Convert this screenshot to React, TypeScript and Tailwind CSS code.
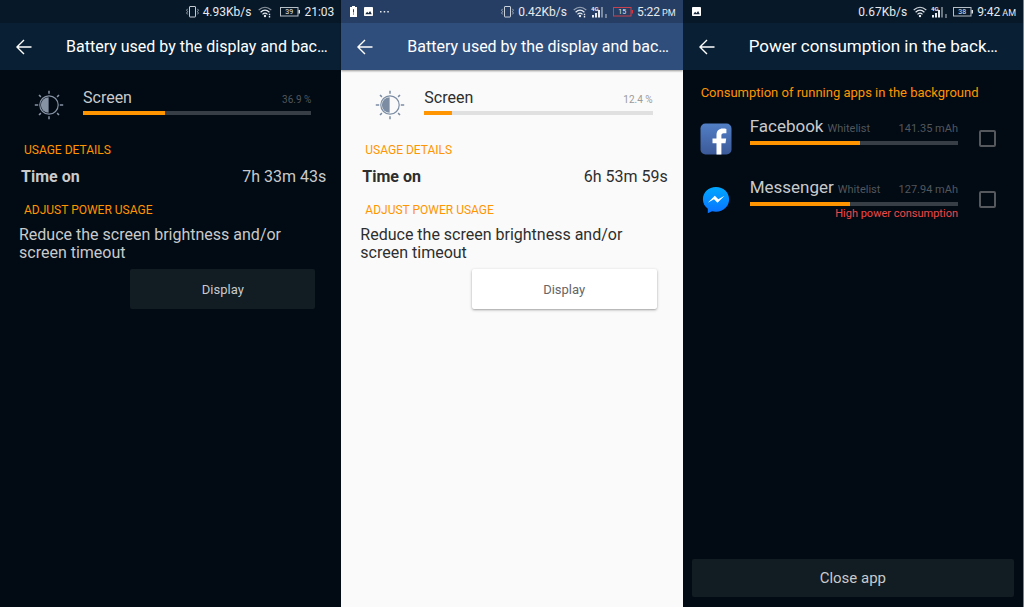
import type { ReactNode } from "react";
import clsx from "clsx";

interface UsagePanelProps {
  dark: boolean;
  percent: string;
  progress: number;
  timeOn: string;
  status: ReactNode;
}

interface AppUsage {
  name: string;
  icon: ReactNode;
  usage: string;
  progress: number;
  warning?: string;
}

function VibrateIcon() {
  return (
    <svg width="13" height="12" viewBox="0 0 13 12" fill="none" stroke="currentColor">
      <rect x="3.5" y="0.5" width="6" height="10.5" rx="0.5" opacity="0.85" />
      <path
        d="M1.6 2.8 .6 4.2l1 1.4-1 1.4 1 1.4M11.4 2.8l1 1.4-1 1.4 1 1.4-1 1.4"
        strokeWidth="0.8"
        opacity="0.8"
      />
    </svg>
  );
}

function WifiIcon({ arrows = true }: { arrows?: boolean }) {
  return (
    <svg width="14" height="12" viewBox="0 0 14 12" fill="none" stroke="currentColor">
      <path d="M.7 4Q7-1.6 13.3 4" strokeWidth="1.1" opacity={arrows ? 0.6 : 0.9} />
      <path d="M2.6 6.2Q7 2 11.4 6.2M4.5 8.4Q7 6 9.5 8.4" strokeWidth="1.2" />
      <circle cx="7" cy="10" r="1.2" fill="currentColor" stroke="none" />
      {arrows && <path d="M11.5 7.8v1.4M11.5 10v1.4" strokeWidth="1.4" />}
    </svg>
  );
}

function SignalIcon() {
  return (
    <svg width="16" height="12" viewBox="0 0 16 12" fill="currentColor">
      <text x="0" y="5" fontSize="6" fontWeight="700" fontFamily="Roboto, sans-serif">
        4G
      </text>
      <path d="M1 9h2v2.5H1zM4 7h2v4.500H4zM7 4h2v7.500H7z" />
      <path d="M10 1h2v10.500h-2z" opacity="0.45" />
      <path d="M14.500 8h1v4h-1z" opacity="0.8" />
    </svg>
  );
}

function BatteryIcon({ level, low }: { level: number; low?: boolean }) {
  return (
    <svg width="20" height="10" viewBox="0 0 20 10">
      <rect x="0.5" y="0.5" width="17.5" height="8.5" fill="none" stroke={low ? "#c8414f" : "#b6bec6"} />
      <path d="M18.5 3H20v3.5h-1.5z" fill={low ? "#d8343f" : "#dfe3e6"} />
      <text x="9.3" y="7.4" fontSize="7" textAnchor="middle" fill="#e3e7ea" fontFamily="Roboto, sans-serif">
        {level}
      </text>
    </svg>
  );
}

function BatteryAlertIcon() {
  return (
    <svg width="7" height="11" viewBox="0 0 7 11">
      <path d="M2 0h3v1h2v10H0V1h2z" fill="#fff" />
      <path d="M3 3.2h1v3.4H3zM3 7.5h1v1.1H3z" fill="#2b4368" />
    </svg>
  );
}

function ImageIcon() {
  return (
    <svg width="9" height="9" viewBox="0 0 9 9">
      <rect width="9" height="9" rx="0.8" fill="#fff" />
      <path d="m1.3 7.2 1.8-2.4 1.3 1.4 1.7-2.2 1.7 3.2z" fill="#16273c" />
    </svg>
  );
}

function MoreIcon() {
  return (
    <svg width="9" height="3" viewBox="0 0 9 3" fill="currentColor">
      <path d="M0 1h1.500v1.500H0zM3.700 1h1.500v1.500H3.700zM7.300 1h1.500v1.500H7.300z" />
    </svg>
  );
}

function BrightnessIcon() {
  return (
    <svg width="30" height="30" viewBox="0 0 30 30" fill="none" stroke="currentColor">
      <circle cx="15" cy="15" r="9.2" strokeWidth="1.2" />
      <path d="M14.6 7.3a7.7 7.7 0 0 0 0 15.400z" fill="currentColor" stroke="none" />
      <path
        d="M15 .8v3M15 26.2v3M.8 15h3.400M25.8 15h3.400M5 5l1.900 1.900M23.1 23.1 25 25M25 5l-1.900 1.900M6.900 23.1 5 25"
        strokeWidth="1.5"
      />
    </svg>
  );
}

function FacebookIcon() {
  return (
    <svg width="32" height="32" viewBox="0 0 32 32">
      <defs>
        <linearGradient id="fb" x1="0" y1="0" x2="0" y2="1">
          <stop offset="0" stopColor="#527fc6" />
          <stop offset="1" stopColor="#3b5998" />
        </linearGradient>
      </defs>
      <rect x="0.5" y="0.5" width="31" height="31" rx="5" fill="url(#fb)" />
      <path
        d="M16.500 31.500V20.300h-4v-4.800h4v-3.300c0-4.300 2.400-6.600 6.300-6.600 1.400 0 2.700.1 3.600.3v4.300h-2.600c-1.900 0-2.400.9-2.400 2.400v2.900h4.800l-.7 4.800h-4.100v11.200z"
        fill="#fff"
      />
    </svg>
  );
}

function MessengerIcon() {
  return (
    <svg width="32" height="32" viewBox="0 0 32 32">
      <defs>
        <linearGradient id="msg" x1="0" y1="0" x2="0" y2="1">
          <stop offset="0" stopColor="#00a8ff" />
          <stop offset="1" stopColor="#0a72ff" />
        </linearGradient>
      </defs>
      <path
        d="M16 3C8.600 3 2.900 8.300 2.900 15.300c0 4 1.800 7.200 4.900 9.400v4.500l4.200-2c1.300.3 2.600.5 4 .5 7.400 0 13.100-5.400 13.100-12.400S23.400 3 16 3z"
        fill="url(#msg)"
      />
      <path d="m7.800 18.700 7-7 3.500 3.500 6.200-3.500-7 7.100-3.500-3.500z" fill="#fff" />
    </svg>
  );
}

function StatusBar({ left, children }: { left?: ReactNode; children: ReactNode }) {
  return (
    <div className="flex h-[23px] items-center justify-between bg-black/20 pr-[7px] pl-[9px] text-xs text-[#e6eaee]">
      <div className="flex items-center gap-[7px]">{left}</div>
      <div className="flex items-center">{children}</div>
    </div>
  );
}

function Header({ title, dark, large, status }: { title: string; dark: boolean; large?: boolean; status: ReactNode }) {
  return (
    <header className={clsx("text-white", dark ? "bg-[#091f34]" : "bg-[#304e7c] shadow-xs shadow-black/40")}>
      {status}
      <div className="flex h-[47px] items-center pt-px pl-4">
        <button type="button" aria-label="Back" className="mr-[34px]">
          <svg width="16" height="16" viewBox="0 0 16 16" fill="none" stroke="currentColor" strokeWidth="1.4">
            <path d="M15.500 8H.8M8 1 .9 8l7.100 7" />
          </svg>
        </button>
        <h1 className={clsx("whitespace-nowrap", large ? "text-[17px]" : "text-base")}>{title}</h1>
      </div>
    </header>
  );
}

function Bar({ value, dark }: { value: number; dark: boolean }) {
  return (
    <div className={clsx("h-1", dark ? "bg-[#373e46]" : "bg-[#e0e0e0]")}>
      <div className="h-full bg-[#ff9500]" style={{ width: `${value}%` }} />
    </div>
  );
}

function UsagePanel({ dark, percent, progress, timeOn, status }: UsagePanelProps) {
  return (
    <section className={clsx("flex flex-col", dark ? "bg-[#020a13] text-[#c8cacc]" : "bg-[#fafafa] text-[#2e2e2e]")}>
      <Header title="Battery used by the display and bac…" dark={dark} status={status} />

      <div className="mt-[17px] flex items-start pr-[30px] pl-[34px]">
        <span className={clsx("mt-[3px] mr-[19px]", dark ? "text-[#8593a5]" : "text-[#7b8ca3]")}>
          <BrightnessIcon />
        </span>
        <div className="flex-1">
          <div className="flex h-6 items-baseline justify-between">
            <h2 className="text-base leading-[22px]">Screen</h2>
            <span className={clsx("text-[10px]", dark ? "text-[#51575d]" : "text-[#9b9b9b]")}>{percent}</span>
          </div>
          <Bar value={progress} dark={dark} />
        </div>
      </div>

      <h3 className="mt-5 pl-6 text-xs leading-5 text-[#ff9500]">USAGE DETAILS</h3>
      <div className="mt-[7px] flex justify-between pr-[15px] pl-[21px] text-base leading-5">
        <span className="font-bold">Time on</span>
        <span>{timeOn}</span>
      </div>

      <h3 className="mt-[13px] pl-6 text-xs leading-5 text-[#ff9500]">ADJUST POWER USAGE</h3>
      <p className="mt-1.5 pr-10 pl-[19px] text-base leading-[18px]">
        Reduce the screen brightness and/or screen timeout
      </p>
      <button
        type="button"
        className={clsx(
          "mt-[7px] mr-[26px] h-10 w-[185px] self-end rounded-xs pt-px text-[13px]",
          dark ? "bg-[#121c23]" : "bg-white text-[#666] shadow-sm shadow-black/30"
        )}
      >
        Display
      </button>
    </section>
  );
}

const apps: AppUsage[] = [
  { name: "Facebook", icon: <FacebookIcon />, usage: "141.35 mAh", progress: 53 },
  {
    name: "Messenger",
    icon: <MessengerIcon />,
    usage: "127.94 mAh",
    progress: 48,
    warning: "High power consumption",
  },
];

function BackgroundPanel() {
  return (
    <section className="flex flex-col border-r border-[#7d838a] bg-[#020a13] text-[#c8cacc]">
      <Header
        title="Power consumption in the back…"
        dark
        large
        status={
          <StatusBar left={<ImageIcon />}>
            <span className="mr-1.5">0.67Kb/s</span>
            <WifiIcon arrows={false} />
            <span className="mr-1.5 ml-1">
              <SignalIcon />
            </span>
            <BatteryIcon level={38} />
            <span className="ml-1">9:42</span>
            <span className="ml-0.5 pt-0.5 text-[9px]">AM</span>
          </StatusBar>
        }
      />

      <h2 className="mt-[13px] pl-[18px] text-[13px] leading-5 text-[#ff9500]">
        Consumption of running apps in the background
      </h2>

      <ul className="mt-3">
        {apps.map((app) => (
          <li key={app.name} className="flex h-[61px] items-start pr-[27px] pl-[17px]">
            <span className="mt-2 mr-[18px]">{app.icon}</span>
            <div className="flex-1">
              <div className="flex h-[26px] items-baseline text-[11px] text-[#51575d]">
                <label htmlFor={app.name} className="mr-1 text-[17px] leading-[22px] text-[#c8cacc]">
                  {app.name}
                </label>
                <span>Whitelist</span>
                <span className="ml-auto">{app.usage}</span>
              </div>
              <Bar value={app.progress} dark />
              {app.warning && <p className="text-right text-[11px] leading-4 text-[#f04848]">{app.warning}</p>}
            </div>
            <input
              id={app.name}
              type="checkbox"
              className="mt-[15px] ml-[21px] size-[17px] appearance-none rounded-xs border-2 border-[#55595e] checked:bg-[#ff9500]"
            />
          </li>
        ))}
      </ul>

      <button
        type="button"
        className="mx-[9px] mt-auto mb-[10px] h-[38px] rounded-xs bg-[#121c23] text-[15px]"
      >
        Close app
      </button>
    </section>
  );
}

function App() {
  return (
    <main className="grid min-h-screen grid-cols-3 font-[Roboto,sans-serif]">
      <UsagePanel
        dark
        percent="36.9 %"
        progress={36}
        timeOn="7h 33m 43s"
        status={
          <StatusBar>
            <VibrateIcon />
            <span className="mr-[7px] ml-1">4.93Kb/s</span>
            <WifiIcon />
            <span className="ml-2">
              <BatteryIcon level={39} />
            </span>
            <span className="ml-1">21:03</span>
          </StatusBar>
        }
      />
      <UsagePanel
        dark={false}
        percent="12.4 %"
        progress={12}
        timeOn="6h 53m 59s"
        status={
          <StatusBar
            left={
              <>
                <BatteryAlertIcon />
                <ImageIcon />
                <MoreIcon />
              </>
            }
          >
            <VibrateIcon />
            <span className="mr-1.5 ml-1">0.42Kb/s</span>
            <WifiIcon />
            <span className="mr-1.5 ml-1">
              <SignalIcon />
            </span>
            <BatteryIcon level={15} low />
            <span className="ml-1">5:22</span>
            <span className="ml-0.5 pt-0.5 text-[9px]">PM</span>
          </StatusBar>
        }
      />
      <BackgroundPanel />
    </main>
  );
}

export default App;
